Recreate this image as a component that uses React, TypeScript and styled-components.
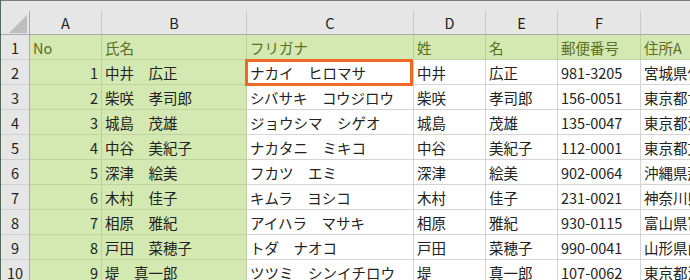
import React from 'react';
import styled, { createGlobalStyle } from 'styled-components';

const GlobalStyle = createGlobalStyle`
  html, body {
    margin: 0;
    padding: 0;
    background: #ffffff;
    overflow: hidden;
  }
  body {
    font-family: "Noto Sans CJK JP", "Noto Sans", sans-serif;
  }
`;

// 列幅 (枠線込み)
const COLS = '29px 72px 145px 167px 72px 72px 83px 1fr';

const Sheet = styled.div`
  display: grid;
  grid-template-columns: ${COLS};
  grid-template-rows: 11px 24px;
  grid-auto-rows: 25px;
  border-left: 1px solid #4d6b58;
  width: 720px;
  font-size: 14.5px;
  color: #222;
`;

const TopStrip = styled.div`
  grid-column: 1 / -1;
  box-sizing: border-box;
  background: #e6e6e6;
  border-top: 1px solid #7c7c7c;
`;

const HeaderCell = styled.div<{ $corner?: boolean }>`
  box-sizing: border-box;
  background: #e6e6e6;
  border-right: 1px solid ${({ $corner }) => ($corner ? '#ababab' : '#c9c9c9')};
  border-bottom: 1px solid #ababab;
  display: flex;
  align-items: center;
  justify-content: ${({ $corner }) => ($corner ? 'flex-end' : 'center')};
  color: #222;
  line-height: 1;
  padding-top: 1px;
`;

const Corner = styled.svg`
  width: 18px;
  height: 18px;
  margin: 0 2px 1px 0;
  align-self: flex-end;
`;

const RowHead = styled.div`
  box-sizing: border-box;
  background: #e6e6e6;
  border-right: 1px solid #ababab;
  border-bottom: 1px solid #cfcfcf;
  display: flex;
  align-items: center;
  justify-content: center;
  color: #222;
`;

const Cell = styled.div<{ $green: boolean; $title: boolean; $right?: boolean; $selected?: boolean }>`
  box-sizing: border-box;
  position: relative;
  background: ${({ $green }) => ($green ? '#d3e9b1' : '#ffffff')};
  border-right: 1px solid ${({ $green }) => ($green ? '#b9cf9c' : '#d4d4d4')};
  border-bottom: 1px solid ${({ $green }) => ($green ? '#bdd4a1' : '#d4d4d4')};
  color: ${({ $title }) => ($title ? '#5c6f22' : '#222')};
  display: flex;
  align-items: center;
  justify-content: ${({ $right }) => ($right ? 'flex-end' : 'flex-start')};
  padding: 1px 3px 0 3px;
  white-space: nowrap;
  overflow: ${({ $selected }) => ($selected ? 'visible' : 'hidden')};
  z-index: ${({ $selected }) => ($selected ? 2 : 'auto')};

  ${({ $selected }) =>
    $selected &&
    `
    &::after {
      content: '';
      position: absolute;
      left: -2px;
      top: -1px;
      right: 0px;
      bottom: -2px;
      border: 3px solid #f0672b;
      pointer-events: none;
    }
  `}
`;

const letters = ['A', 'B', 'C', 'D', 'E', 'F', ''];

const titles = ['No', '氏名', 'フリガナ', '姓', '名', '郵便番号', '住所A'];

const rows: (string | number)[][] = [
  [1, '中井　広正', 'ナカイ　ヒロマサ', '中井', '広正', '981-3205', '宮城県仙'],
  [2, '柴咲　孝司郎', 'シバサキ　コウジロウ', '柴咲', '孝司郎', '156-0051', '東京都世'],
  [3, '城島　茂雄', 'ジョウシマ　シゲオ', '城島', '茂雄', '135-0047', '東京都江'],
  [4, '中谷　美紀子', 'ナカタニ　ミキコ', '中谷', '美紀子', '112-0001', '東京都文'],
  [5, '深津　絵美', 'フカツ　エミ', '深津', '絵美', '902-0064', '沖縄県那'],
  [6, '木村　佳子', 'キムラ　ヨシコ', '木村', '佳子', '231-0021', '神奈川県'],
  [7, '相原　雅紀', 'アイハラ　マサキ', '相原', '雅紀', '930-0115', '富山県富'],
  [8, '戸田　菜穂子', 'トダ　ナオコ', '戸田', '菜穂子', '990-0041', '山形県山'],
  [9, '堤　真一郎', 'ツツミ　シンイチロウ', '堤', '真一郎', '107-0062', '東京都港'],
];

const App = () => {
  return (
    <>
      <GlobalStyle />
      <Sheet>
        <TopStrip />
        <HeaderCell $corner>
          <Corner viewBox="0 0 18 18">
            <polygon points="18,0 18,18 0,18" fill="#bdbdbd" />
          </Corner>
        </HeaderCell>
        {letters.map((l, i) => (
          <HeaderCell key={i}>{l}</HeaderCell>
        ))}

        <RowHead>1</RowHead>
        {titles.map((t) => (
          <Cell key={t} $green $title>
            {t}
          </Cell>
        ))}

        {rows.map((row, r) => (
          <React.Fragment key={r}>
            <RowHead>{r + 2}</RowHead>
            {row.map((v, c) => (
              <Cell
                key={c}
                $green={c < 2}
                $title={false}
                $right={c === 0}
                $selected={r === 0 && c === 2}
              >
                {v}
              </Cell>
            ))}
          </React.Fragment>
        ))}
      </Sheet>
    </>
  );
};

export default App;
